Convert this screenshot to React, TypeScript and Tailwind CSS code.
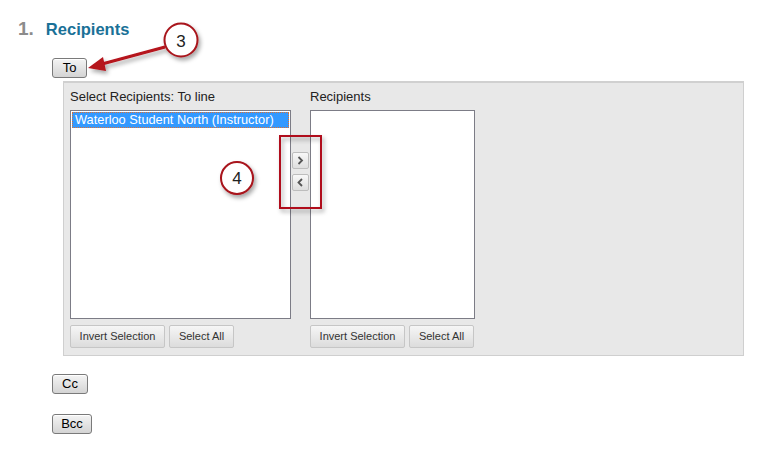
import React from "react";

function SmallBtn({ children, w }: { children: React.ReactNode; w: string }) {
  return (
    <button
      className={`${w} h-[23px] rounded-[2px] border border-[#c6c6c6] bg-gradient-to-b from-[#f6f6f6] to-[#dcdcdc] text-[11px] text-[#333] leading-none`}
    >
      {children}
    </button>
  );
}

function HeadBtn({ children, w }: { children: React.ReactNode; w: string }) {
  return (
    <button
      className={`${w} h-[20px] rounded-[3px] border border-[#7a7a7a] bg-gradient-to-b from-[#f4f4f4] to-[#d4d4d4] text-[13px] text-black leading-none shadow-[inset_0_1px_0_#fff]`}
    >
      {children}
    </button>
  );
}

function ArrowBtn({ dir }: { dir: "r" | "l" }) {
  return (
    <div className="w-[17px] h-[17px] border border-[#bdbdbd] rounded-[2px] bg-gradient-to-b from-[#f8f8f8] to-[#dedede] flex items-center justify-center">
      <svg width="7" height="9" viewBox="0 0 7 9">
        {dir === "r" ? (
          <path d="M1.5 1 L5 4.5 L1.5 8" stroke="#555" strokeWidth="1.8" fill="none" />
        ) : (
          <path d="M5 1 L1.5 4.5 L5 8" stroke="#555" strokeWidth="1.8" fill="none" />
        )}
      </svg>
    </div>
  );
}

export default function App() {
  return (
    <div
      className="relative w-[766px] h-[457px] bg-white overflow-hidden"
      style={{ fontFamily: '"Liberation Sans", Arial, sans-serif' }}
    >
      <div className="pl-[18px] pt-[15px] flex items-baseline">
        <span className="text-[19px] font-bold text-[#8c8c8c]">1.</span>
        <span className="ml-[12px] text-[16.5px] font-bold text-[#1a7197]">Recipients</span>
      </div>

      <div className="pl-[52px] pt-[14px]">
        <div className="flex">
          <HeadBtn w="w-[35px]">To</HeadBtn>
        </div>

        <div className="ml-[11px] mt-[3px] w-[681px] h-[275px] bg-[#e8e8e8] border border-[#cfcfcf] border-t-2 border-t-[#d0d0d0] pl-[6px] pt-[6px] flex">
          <div className="w-[221px] flex flex-col">
            <div className="text-[13px] text-[#222] h-[21px] leading-[15px]">Select Recipients: To line</div>
            <div className="h-[209px] border border-[#7c7c86] bg-white p-[1px]">
              <div className="h-[16px] bg-[#3399ff] text-white text-[12.8px] leading-[14px] pl-[2px] border border-dotted border-[#e07030]">
                Waterloo Student North (Instructor)
              </div>
            </div>
            <div className="mt-[6px] flex gap-[4px]">
              <SmallBtn w="w-[95px]">Invert Selection</SmallBtn>
              <SmallBtn w="w-[65px]">Select All</SmallBtn>
            </div>
          </div>

          <div className="w-[19px] flex flex-col items-center pt-[63px] gap-[5px]">
            <ArrowBtn dir="r" />
            <ArrowBtn dir="l" />
          </div>

          <div className="w-[165px] flex flex-col">
            <div className="text-[13px] text-[#222] h-[21px] leading-[15px]">Recipients</div>
            <div className="h-[209px] border border-[#7c7c86] bg-white"></div>
            <div className="mt-[6px] flex gap-[4px]">
              <SmallBtn w="w-[95px]">Invert Selection</SmallBtn>
              <SmallBtn w="w-[65px]">Select All</SmallBtn>
            </div>
          </div>
        </div>

        <div className="mt-[18px] flex">
          <HeadBtn w="w-[36px]">Cc</HeadBtn>
        </div>
        <div className="mt-[20px] flex">
          <HeadBtn w="w-[40px]">Bcc</HeadBtn>
        </div>
      </div>

      {/* annotations */}
      <svg className="absolute left-0 top-0 pointer-events-none" width="766" height="457">
        <defs>
          <filter id="sh" x="-50%" y="-50%" width="200%" height="200%">
            <feDropShadow dx="2" dy="3" stdDeviation="2" floodColor="#000" floodOpacity="0.35" />
          </filter>
        </defs>
        <g filter="url(#sh)">
          <line x1="165" y1="47" x2="102" y2="64" stroke="#b5121b" strokeWidth="3" />
          <polygon points="88,68 103,57 106,71" fill="#b5121b" />
          <circle cx="181" cy="40" r="16.5" fill="#fff" stroke="#a8121a" strokeWidth="2" />
          <circle cx="237" cy="178" r="16" fill="#fff" stroke="#a8121a" strokeWidth="2" />
          <rect x="280" y="136" width="41" height="72" fill="none" stroke="#b0101a" strokeWidth="2" />
        </g>
        <text x="181" y="47" textAnchor="middle" fontSize="17" fill="#222" fontFamily="Liberation Sans, Arial, sans-serif">3</text>
        <text x="237" y="184" textAnchor="middle" fontSize="17" fill="#222" fontFamily="Liberation Sans, Arial, sans-serif">4</text>
      </svg>
    </div>
  );
}
